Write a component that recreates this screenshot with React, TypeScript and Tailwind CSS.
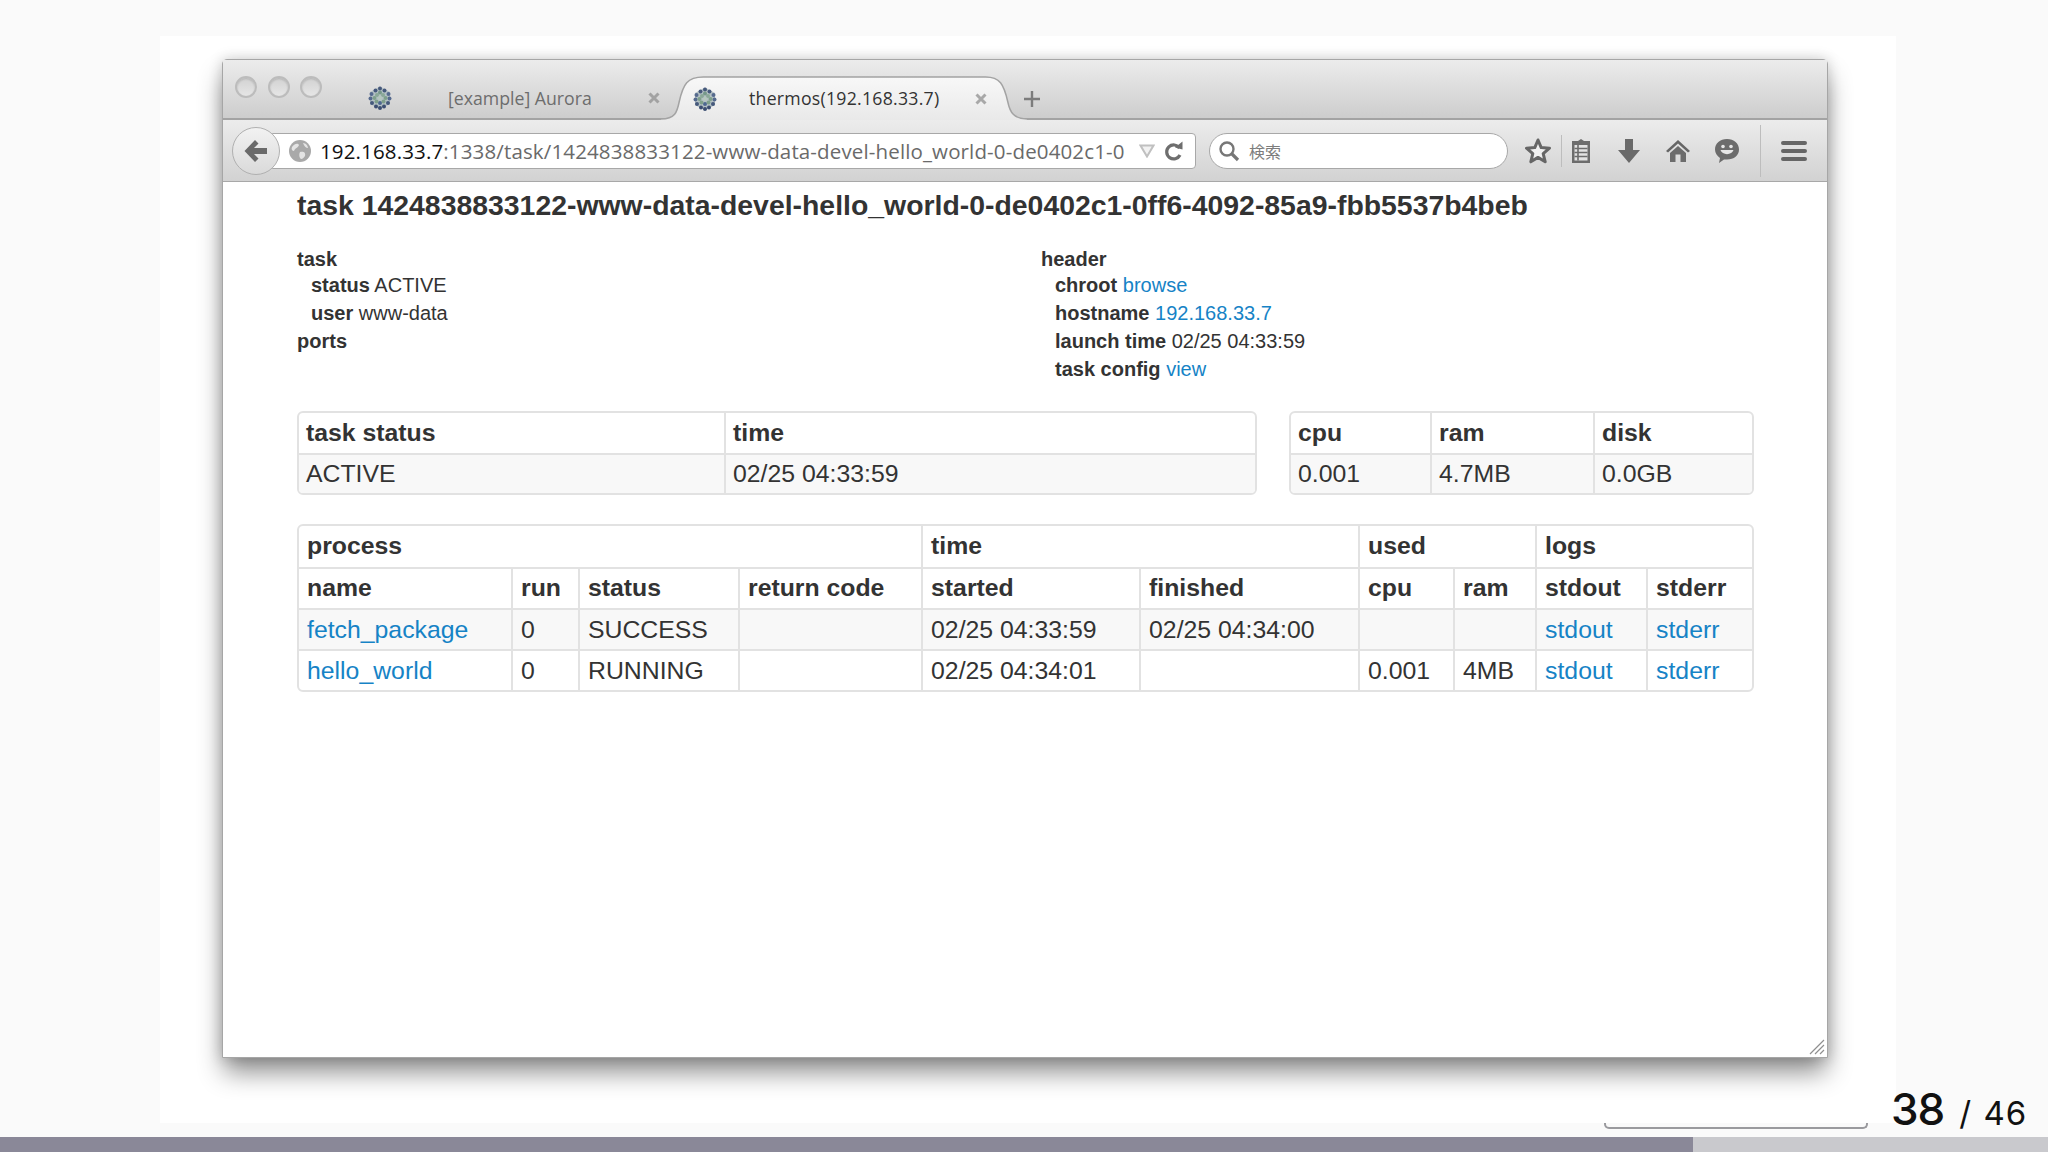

import React from "react";

function Favicon() {
  const dots: [number, number, string][] = [
    [12, 2.5, "#46597c"], [7.5, 4.5, "#46597c"], [16.5, 4.5, "#46597c"], [3.5, 8, "#566a8e"], [20.5, 8, "#566a8e"],
    [2.5, 12.5, "#566a8e"], [21.5, 12.5, "#566a8e"], [4, 17, "#46597c"], [20, 17, "#46597c"], [8, 20.5, "#3c4e72"],
    [16, 20.5, "#3c4e72"], [12, 22, "#3c4e72"], [12, 17, "#4e6890"], [8.5, 15.5, "#7fa08c"], [15.5, 15.5, "#7fa08c"],
    [9, 9, "#8aa898"], [15, 9, "#8aa898"], [12, 6.5, "#76988a"], [6.5, 12, "#7fa08c"], [17.5, 12, "#7fa08c"], [12, 12, "#b5c8bd"],
  ];
  return (
    <svg width="24" height="24" viewBox="0 0 24 24" className="shrink-0">
      <path d="M12 0.5 L22 6 V18 L12 23.5 L2 18 V6 Z" fill="#b4c0c4" />
      {dots.map(([x, y, c], i) => (
        <circle key={i} cx={x} cy={y} r="2" fill={c} />
      ))}
    </svg>
  );
}

function TabClose({ color }: { color: string }) {
  return (
    <svg width="14" height="14" viewBox="0 0 14 14" className="shrink-0">
      <path d="M2.5 2.5 L11.5 11.5 M11.5 2.5 L2.5 11.5" stroke={color} strokeWidth="3" />
    </svg>
  );
}

function Light() {
  return (
    <div className="w-[22px] h-[22px] rounded-full border-2 border-[#bcbcbc] bg-gradient-to-b from-[#d2d2d2] to-[#e6e6e6] shadow-[inset_0_1px_2px_rgba(0,0,0,0.15)] shrink-0" />
  );
}

function TitleBar() {
  return (
    <div className="h-[60px] flex items-center bg-gradient-to-b from-[#ececec] to-[#cdcdcd] border-b-2 border-[#a3a3a3] shrink-0 font-['Open_Sans',sans-serif] text-[17.7px]">
      <div className="flex gap-[10.5px] ml-[12px] mb-[4px]">
        <Light />
        <Light />
        <Light />
      </div>
      <div className="flex items-center self-end h-[44px] pt-[4px] ml-[46px] w-[293px] shrink-0">
        <Favicon />
        <span className="ml-[56px] text-[#6d6d6d] w-[212px] whitespace-nowrap">[example] Aurora</span>
        <TabClose color="#a2a2a2" />
      </div>
      <div className="relative h-[44px] w-[366px] shrink-0 self-end -mb-[2px]">
        <svg viewBox="0 0 363 44" preserveAspectRatio="none" className="absolute inset-0 w-full h-full">
          <defs>
            <linearGradient id="tabg" x1="0" y1="0" x2="0" y2="1">
              <stop offset="0" stopColor="#f8f8f8" />
              <stop offset="1" stopColor="#e9e9e9" />
            </linearGradient>
          </defs>
          <path d="M0 43 C14 43 16 36 18 26 C22 8 26 1 42 1 H322 C336 1 340 8 344 26 C346 36 350 43 363 43 V44 H0 Z" fill="url(#tabg)" />
          <path d="M0 43 C14 43 16 36 18 26 C22 8 26 1 42 1 H322 C336 1 340 8 344 26 C346 36 350 43 363 43" fill="none" stroke="#a3a3a3" strokeWidth="1.5" />
        </svg>
        <div className="relative flex items-center h-full pl-[32px] pt-[1px]">
          <Favicon />
          <span className="ml-[32px] text-[#333] w-[225px] whitespace-nowrap tracking-[0.25px]">thermos(192.168.33.7)</span>
          <TabClose color="#a8a8a8" />
        </div>
      </div>
      <svg width="18" height="18" viewBox="0 0 18 18" className="-ml-[4px] self-end mb-[10px] shrink-0">
        <path d="M9 1 V17 M1 9 H17" stroke="#7c7c7c" strokeWidth="2.4" />
      </svg>
    </div>
  );
}

function BackButton() {
  return (
    <div className="relative z-10 w-[48px] h-[48px] rounded-full border border-[#b0b0b0] bg-gradient-to-b from-[#f2f2f2] to-[#dadada] flex items-center justify-center shrink-0">
      <svg width="26" height="24" viewBox="0 0 26 24">
        <path d="M12 1 L1.5 12 L12 23 L15.5 19.5 L11 15 H24 V9 H11 L15.5 4.5 Z" fill="#6a6a6a" />
      </svg>
    </div>
  );
}

function Globe() {
  return (
    <svg width="22" height="22" viewBox="0 0 22 22" className="shrink-0">
      <circle cx="11" cy="11" r="11" fill="#a9a9a9" />
      <path d="M3 7 C6 3 9 3 10 5 C9 8 6 8 5 11 C3 11 2 9 3 7 Z M11 12 C14 11 17 12 16 16 C14 19 12 20 11 18 C10 16 10 14 11 12 Z M14 3 C17 3 19 6 19 8 C17 8 15 6 14 3 Z" fill="#e4e4e4" />
    </svg>
  );
}

function UrlBar() {
  return (
    <div className="flex items-center h-[36px] flex-1 min-w-0 -ml-[8px] pl-[16px] bg-white border border-[#a8a8a8] rounded-r-[4px] font-['Open_Sans',sans-serif] text-[20.5px] tracking-[0.14px]">
      <Globe />
      <span className="ml-[9px] pt-[1px] w-[808px] shrink-0 whitespace-nowrap overflow-hidden text-[#6a6a6a]">
        <span className="text-[#111]">192.168.33.7</span>:1338/task/1424838833122-www-data-devel-hello_world-0-de0402c1-0
      </span>
      <svg width="16" height="14" viewBox="0 0 16 14" className="ml-[11px] shrink-0">
        <path d="M1.5 1.5 H14.5 L8 12.5 Z" fill="#f2f2f2" stroke="#c0c0c0" strokeWidth="2" />
      </svg>
      <svg width="20" height="22" viewBox="0 0 20 22" className="ml-[9px] shrink-0">
        <path d="M15.5 8 A7 7 0 1 0 16 15" fill="none" stroke="#6e6e6e" strokeWidth="3.2" />
        <path d="M11 7.5 L18.5 9.5 L18.5 1.5 Z" fill="#6e6e6e" />
      </svg>
    </div>
  );
}

function SearchBox() {
  return (
    <div className="flex items-center h-[36px] w-[299px] ml-[13px] pl-[8px] shrink-0 bg-white border border-[#a8a8a8] rounded-[18px] text-[16px] text-[#7d7d7d] font-['Noto_Sans_CJK_JP',sans-serif]">
      <svg width="22" height="22" viewBox="0 0 22 22" className="shrink-0">
        <circle cx="9" cy="9" r="6.5" fill="none" stroke="#777" strokeWidth="2.4" />
        <path d="M13.5 13.5 L20 20" stroke="#777" strokeWidth="3.2" />
      </svg>
      <span className="ml-[9px]">検索</span>
    </div>
  );
}

function StarIcon() {
  return (
    <svg width="26" height="26" viewBox="0 0 26 26" className="shrink-0">
      <path d="M13 2 L16.2 9.6 L24.5 10.2 L18.2 15.6 L20.2 23.8 L13 19.4 L5.8 23.8 L7.8 15.6 L1.5 10.2 L9.8 9.6 Z" fill="#f0f0f0" stroke="#666" strokeWidth="3" strokeLinejoin="round" />
    </svg>
  );
}

function ClipIcon() {
  return (
    <svg width="22" height="26" viewBox="0 0 22 26" className="shrink-0">
      <path d="M8 3 L11 1 L14 3 H20 V25 H2 V3 Z" fill="#6c6c6c" />
      <rect x="4.5" y="7" width="13" height="15.5" fill="#e2e2e2" />
      <path d="M4.5 10.5 H17.5 M4.5 14.5 H17.5 M4.5 18.5 H17.5 M8 7 V22.5" stroke="#6c6c6c" strokeWidth="1.6" />
    </svg>
  );
}

function DownIcon() {
  return (
    <svg width="24" height="26" viewBox="0 0 24 26" className="shrink-0">
      <path d="M8 1 H16 V12 H23 L12 25 L1 12 H8 Z" fill="#6a6a6a" />
    </svg>
  );
}

function HomeIcon() {
  return (
    <svg width="24" height="24" viewBox="0 0 24 24" className="shrink-0">
      <path d="M12 1 L24 12 L22 13.5 L12 4.5 L2 13.5 L0 12 Z" fill="#666" />
      <path d="M12 7 L20 14 V23 H14.5 V15.5 H9.5 V23 H4 V14 Z" fill="#6c6c6c" />
    </svg>
  );
}

function ChatIcon() {
  return (
    <svg width="26" height="26" viewBox="0 0 26 26" className="shrink-0">
      <path d="M13 1 C20 1 25 5.5 25 11.5 C25 17.5 20 21.5 13 21.5 L10 21.5 L5 25 L6 20 C3 18 1 15 1 11.5 C1 5.5 6 1 13 1 Z" fill="#6c6c6c" />
      <circle cx="9" cy="8.5" r="1.8" fill="#e6e6e6" />
      <circle cx="17" cy="8.5" r="1.8" fill="#e6e6e6" />
      <path d="M6.5 12 C8 17.5 18 17.5 19.5 12 Z" fill="#e6e6e6" />
    </svg>
  );
}

function MenuIcon() {
  return (
    <svg width="26" height="22" viewBox="0 0 26 22" className="shrink-0">
      <path d="M2 3 H24 M2 11 H24 M2 19 H24" stroke="#666" strokeWidth="4" strokeLinecap="round" />
    </svg>
  );
}

function ToolBar() {
  return (
    <div className="h-[62px] flex items-center pl-[9px] pr-[20px] bg-gradient-to-b from-[#ececec] to-[#d2d2d2] border-b border-[#a8a8a8] shrink-0">
      <BackButton />
      <UrlBar />
      <SearchBox />
      <div className="flex items-center ml-[17px]">
        <StarIcon />
        <div className="w-px h-[32px] bg-[#bdbdbd] ml-[10px]" />
        <div className="ml-[8px]"><ClipIcon /></div>
        <div className="ml-[25px]"><DownIcon /></div>
        <div className="ml-[25px]"><HomeIcon /></div>
        <div className="ml-[24px]"><ChatIcon /></div>
        <div className="w-px h-[52px] bg-[#bdbdbd] ml-[20px]" />
        <div className="ml-[20px]"><MenuIcon /></div>
      </div>
    </div>
  );
}

function A({ children }: { children: React.ReactNode }) {
  return <a className="text-[#1683c6]">{children}</a>;
}

function Info() {
  return (
    <div className="flex mt-[23px] text-[20px] leading-[28px] text-[#333]">
      <div className="w-[744px] shrink-0">
        <div className="font-bold h-[26px]">task</div>
        <div className="pl-[14px]"><b>status</b> ACTIVE</div>
        <div className="pl-[14px]"><b>user</b> www-data</div>
        <div className="font-bold">ports</div>
      </div>
      <div>
        <div className="font-bold h-[26px]">header</div>
        <div className="pl-[14px]"><b>chroot</b> <A>browse</A></div>
        <div className="pl-[14px]"><b>hostname</b> <A>192.168.33.7</A></div>
        <div className="pl-[14px]"><b>launch time</b> 02/25 04:33:59</div>
        <div className="pl-[14px]"><b>task config</b> <A>view</A></div>
      </div>
    </div>
  );
}

const tableBox = "border-2 border-[#e2e2e2] rounded-[6px] overflow-hidden bg-white";
const thS = "h-[40px] px-[7px] text-left font-bold border-l-2 border-[#e2e2e2] first:border-l-0 whitespace-nowrap";
const tdS = "h-[40px] px-[7px] border-l-2 border-t-2 border-[#e2e2e2] first:border-l-0 whitespace-nowrap";
const th = "h-[41px] px-[8px] pb-[2px] text-left font-bold border-l-2 border-[#e2e2e2] first:border-l-0 whitespace-nowrap";
const td = "h-[41px] px-[8px] border-l-2 border-t-2 border-[#e2e2e2] first:border-l-0 whitespace-nowrap";
const thTop = "h-[41px] px-[8px] pb-[2px] text-left font-bold border-l-2 border-t-2 border-[#e2e2e2] first:border-l-0 whitespace-nowrap";

function StatusTables() {
  return (
    <div className="flex gap-[32px] mt-[28px] text-[24.8px] text-[#333]">
      <div className={`${tableBox} w-[960px]`}>
        <table className="w-full table-fixed border-separate border-spacing-0">
          <colgroup>
            <col className="w-[425px]" />
            <col />
          </colgroup>
          <thead>
            <tr><th className={thS}>task status</th><th className={thS}>time</th></tr>
          </thead>
          <tbody className="bg-[#f8f8f8]">
            <tr><td className={tdS}>ACTIVE</td><td className={tdS}>02/25 04:33:59</td></tr>
          </tbody>
        </table>
      </div>
      <div className={`${tableBox} w-[465px]`}>
        <table className="w-full table-fixed border-separate border-spacing-0">
          <colgroup>
            <col className="w-[139px]" />
            <col className="w-[163px]" />
            <col />
          </colgroup>
          <thead>
            <tr><th className={thS}>cpu</th><th className={thS}>ram</th><th className={thS}>disk</th></tr>
          </thead>
          <tbody className="bg-[#f8f8f8]">
            <tr><td className={tdS}>0.001</td><td className={tdS}>4.7MB</td><td className={tdS}>0.0GB</td></tr>
          </tbody>
        </table>
      </div>
    </div>
  );
}

function ProcessTable() {
  return (
    <div className={`${tableBox} w-[1457px] mt-[29px] text-[24.8px] text-[#333]`}>
      <table className="w-full table-fixed border-separate border-spacing-0">
        <colgroup>
          <col className="w-[212px]" />
          <col className="w-[67px]" />
          <col className="w-[160px]" />
          <col className="w-[183px]" />
          <col className="w-[218px]" />
          <col className="w-[219px]" />
          <col className="w-[95px]" />
          <col className="w-[82px]" />
          <col className="w-[111px]" />
          <col />
        </colgroup>
        <thead>
          <tr>
            <th colSpan={4} className={th}>process</th>
            <th colSpan={2} className={th}>time</th>
            <th colSpan={2} className={th}>used</th>
            <th colSpan={2} className={th}>logs</th>
          </tr>
          <tr>
            <th className={thTop}>name</th>
            <th className={thTop}>run</th>
            <th className={thTop}>status</th>
            <th className={thTop}>return code</th>
            <th className={thTop}>started</th>
            <th className={thTop}>finished</th>
            <th className={thTop}>cpu</th>
            <th className={thTop}>ram</th>
            <th className={thTop}>stdout</th>
            <th className={thTop}>stderr</th>
          </tr>
        </thead>
        <tbody>
          <tr className="bg-[#f8f8f8]">
            <td className={td}><A>fetch_package</A></td>
            <td className={td}>0</td>
            <td className={td}>SUCCESS</td>
            <td className={td}></td>
            <td className={td}>02/25 04:33:59</td>
            <td className={td}>02/25 04:34:00</td>
            <td className={td}></td>
            <td className={td}></td>
            <td className={td}><A>stdout</A></td>
            <td className={td}><A>stderr</A></td>
          </tr>
          <tr>
            <td className={td}><A>hello_world</A></td>
            <td className={td}>0</td>
            <td className={td}>RUNNING</td>
            <td className={td}></td>
            <td className={td}>02/25 04:34:01</td>
            <td className={td}></td>
            <td className={td}>0.001</td>
            <td className={td}>4MB</td>
            <td className={td}><A>stdout</A></td>
            <td className={td}><A>stderr</A></td>
          </tr>
        </tbody>
      </table>
    </div>
  );
}

export default function App() {
  return (
    <div className="relative w-[2048px] h-[1152px] overflow-hidden flex flex-col bg-[#fafafa] font-['Liberation_Sans',Arial,sans-serif]">
      <div className="flex-1 pt-[36px] pl-[160px] pr-[152px]">
        <div className="h-[1087px] bg-white pt-[23px] pl-[62px]">
          <div className="w-[1606px] h-[999px] flex flex-col border border-[#a6a6a6] rounded-t-[5px] bg-white shadow-[0_16px_26px_-2px_rgba(0,0,0,0.45),0_0_14px_rgba(0,0,0,0.18)]">
            <TitleBar />
            <ToolBar />
            <div className="relative flex-1 pl-[74px]">
              <h1 className="mt-[6px] text-[28.4px] leading-[34px] font-bold text-[#333] whitespace-nowrap">
                task 1424838833122-www-data-devel-hello_world-0-de0402c1-0ff6-4092-85a9-fbb5537b4beb
              </h1>
              <Info />
              <StatusTables />
              <ProcessTable />
              <svg width="16" height="16" viewBox="0 0 16 16" className="absolute right-[2px] bottom-[2px]">
                <path d="M1 15 L15 1 M6 15 L15 6 M11 15 L15 11" stroke="#8f8f8f" strokeWidth="1.2" />
              </svg>
            </div>
          </div>
        </div>
      </div>
      <div className="h-[15px] shrink-0 bg-[#c9c9cd]">
        <div className="h-full w-[1693px] bg-[#8a8898]" />
      </div>
      <div className="absolute left-[1604px] top-[1123px] w-[264px] h-[6px] border-2 border-t-0 border-[#9a9a9e] rounded-b-[5px]" />
      <div className="absolute left-[1891px] top-[1081px] whitespace-nowrap font-['Inter',sans-serif] text-[#111] leading-none flex items-baseline">
        <span className="text-[44px] leading-[56px] tracking-[-1px] font-medium">38</span>
        <span className="text-[33px] ml-[15px] tracking-[1px] [word-spacing:1px]">/ 46</span>
      </div>
    </div>
  );
}
